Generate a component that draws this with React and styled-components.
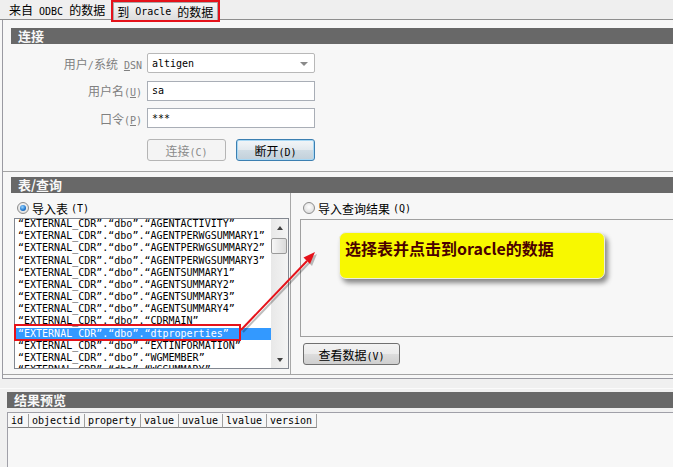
import React from "react";
import styled, { createGlobalStyle, css } from "styled-components";

const GlobalStyle = createGlobalStyle`
  html, body { margin: 0; padding: 0; background: #f7f7f7; }
  body {
    font-family: "Noto Sans CJK SC", "Liberation Sans", sans-serif;
    font-size: 12px;
    color: #000;
  }
`;

const mono = css`
  font-family: "DejaVu Sans Mono", "Noto Sans CJK SC", monospace;
  font-size: 10px;
  letter-spacing: 0;
`;

const Screen = styled.div`
  position: relative;
  width: 673px;
  height: 467px;
  overflow: hidden;
  background: #f7f7f7;
`;

const L = styled.span`
  ${mono}
  text-decoration: ${({ $u }) => ($u ? "underline" : "none")};
`;

/* ---------- tabs ---------- */
const TabBar = styled.div`
  display: flex;
  align-items: flex-start;
  height: 19px;
  padding-left: 9px;
  background: #efefef;
  border-bottom: 1px solid #8e8e8e;
`;

const TabLabel = styled.div`
  line-height: 19px;
  margin-right: 6px;
  white-space: pre;
`;

const ActiveTab = styled.div`
  position: relative;
  z-index: 2;
  display: flex;
  height: 22px;
  box-sizing: border-box;
  border: 2px solid #e5121a;
`;

const TabFace = styled.span`
  display: flex;
  align-items: center;
  padding: 0 4px 0 3px;
  background: linear-gradient(#f6f6f6, #dcdcdc);
  border: 1px solid #a8a8a8;
  border-bottom: none;
  white-space: pre;
`;

/* ---------- main frame ---------- */
const Main = styled.div`
  margin-left: 2px;
  padding: 8px 0 3px;
  border-left: 1px solid #9a9aa2;
  border-bottom: 1px solid #9a9aa2;
`;

const SectionHeader = styled.div`
  margin-left: ${({ $indent }) => $indent}px;
  margin-top: ${({ $top = 0 }) => $top}px;
  height: 16px;
  line-height: 16px;
  padding-left: 7px;
  background: #686868;
  color: #f8f8f8;
  font-size: 13px;
  font-weight: bold;
`;

const ConnectGroup = styled.div`
  padding-bottom: 10px;
  border-bottom: 1px solid #a4a4a4;
`;

const Form = styled.div`
  display: grid;
  grid-template-columns: 139px 168px;
  grid-template-rows: 20px 20px 20px auto;
  column-gap: 5px;
  row-gap: 7.5px;
  margin-top: 9px;
`;

const Label = styled.label`
  justify-self: end;
  align-self: center;
  color: #808080;
  white-space: pre;
`;

const Field = styled.div`
  position: relative;
  display: flex;
  align-items: center;
  box-sizing: border-box;
  height: 20px;
  padding-left: 4px;
  background: #fff;
  border: 1px solid ${({ $select }) => ($select ? "#b8b8b8" : "#a9aeb6")};
  border-radius: ${({ $select }) => ($select ? "2px" : "0")};
  ${mono}

  ${({ $select }) =>
    $select &&
    css`
      &::after {
        content: "";
        position: absolute;
        right: 6px;
        top: 8px;
        border-left: 4px solid transparent;
        border-right: 4px solid transparent;
        border-top: 4px solid #8a8a8a;
      }
    `}
`;

const ButtonRow = styled.div`
  grid-column: 2;
  display: flex;
  gap: 10px;
  margin-top: 3.5px;
  height: 22px;
`;

const Button = styled.button`
  box-sizing: border-box;
  width: ${({ $w }) => $w}px;
  height: 22px;
  padding: 0;
  border-radius: 3px;
  font-family: "Noto Sans CJK SC", sans-serif;
  font-size: 12px;
  white-space: pre;
  ${({ $variant }) =>
    $variant === "disabled"
      ? css`
          color: #8a8a8a;
          border: 1px solid #b5b5b5;
          background: #f4f4f4;
        `
      : $variant === "focus"
      ? css`
          color: #000;
          border: 1px solid #3c7fb1;
          box-shadow: inset 0 0 0 1px #a8d8f4;
          background: linear-gradient(#f3f6f8, #e2e9ee 50%, #d0dce4 51%, #c2d0da);
        `
      : css`
          color: #000;
          border: 1px solid #707070;
          background: linear-gradient(#f3f3f3, #ebebeb 50%, #dddddd 51%, #cfcfcf);
        `}
`;

/* ---------- table / query ---------- */
const Split = styled.div`
  display: grid;
  grid-template-columns: 288px 1fr;
  border-bottom: 1px solid #a4a4a4;
`;

const LeftPanel = styled.div`
  padding: 7px 0 5px 11px;
  border-right: 1px solid #a8a8a8;
`;

const RightPanel = styled.div`
  padding: 7px 0 0 9px;
`;

const RadioRow = styled.div`
  display: flex;
  align-items: center;
  gap: 3px;
  height: 16px;
  padding-left: 3px;
  white-space: pre;
`;

const Radio = styled.span`
  position: relative;
  width: 12px;
  height: 12px;
  box-sizing: border-box;
  border-radius: 50%;
  border: 1px solid #8c8c8c;
  background: radial-gradient(circle at 50% 40%, #ffffff, #d4d4d4);

  ${({ $checked }) =>
    $checked &&
    css`
      &::after {
        content: "";
        position: absolute;
        inset: 2px;
        border-radius: 50%;
        background: radial-gradient(circle at 40% 35%, #9ad6ff, #1d74cc 60%, #0b4a92);
      }
    `}
`;

const List = styled.div`
  position: relative;
  display: flex;
  box-sizing: border-box;
  width: 275px;
  height: 151px;
  margin-top: 2px;
  background: #fff;
  border: 1px solid #828790;
`;

const Rows = styled.div`
  flex: 1;
  margin-top: -1px;
  overflow: hidden;
`;

const Row = styled.div`
  height: 12.18px;
  line-height: 12.18px;
  padding-left: 3px;
  white-space: pre;
  ${mono}
  color: ${({ $selected }) => ($selected ? "#fff" : "#000")};
  background: ${({ $selected }) => ($selected ? "#3399ff" : "transparent")};
`;

const Scrollbar = styled.div`
  display: flex;
  flex-direction: column;
  width: 17px;
  background: linear-gradient(90deg, #e8e8e8, #f4f4f4);
`;

const ScrollArrow = styled.div`
  height: 17px;
  display: flex;
  align-items: center;
  justify-content: center;
  margin-top: ${({ $down }) => ($down ? "auto" : "0")};

  &::before {
    content: "";
    border-left: 3.5px solid transparent;
    border-right: 3.5px solid transparent;
    ${({ $down }) =>
      $down ? "border-top: 4px solid #404040;" : "border-bottom: 4px solid #404040;"}
  }
`;

const Thumb = styled.div`
  height: 16px;
  margin: 2px 1px 0 0;
  box-sizing: border-box;
  border: 1px solid #9a9a9a;
  border-radius: 2px;
  background: linear-gradient(90deg, #f6f6f6, #dadada);
`;

const Marker = styled.div`
  position: absolute;
  z-index: 2;
  left: -1px;
  top: 105px;
  width: 227px;
  height: 17px;
  box-sizing: border-box;
  border: 2px solid #e5121a;
`;

const QueryBox = styled.div`
  position: relative;
  box-sizing: border-box;
  height: 118px;
  margin-top: 3px;
  background: #f7f7f7;
  border: 1px solid #a0a0a0;
  border-right: none;
`;

const Callout = styled.div`
  position: absolute;
  left: 38px;
  top: 12px;
  width: 266px;
  height: 47px;
  box-sizing: border-box;
  padding: 5px 0 0 5px;
  line-height: 20px;
  background: #f8f800;
  border: 1px solid #ecece0;
  border-radius: 7px;
  box-shadow: 3px 4px 5px rgba(0, 0, 0, 0.45);
  color: #4a0000;
  font-size: 16px;
  font-weight: bold;
`;

const ViewButtonWrap = styled.div`
  margin: 6px 0 0 3px;
`;

/* ---------- preview ---------- */
const Preview = styled.div`
  height: 88px;
  display: flex;
  flex-direction: column;
  padding: 13px 0 0 7px;
  background: #f0f0f0;
  box-shadow: inset 0 9px 0 #f0f0f0, inset 0 10px 0 #fbfbfb;
`;

const PreviewTable = styled.div`
  flex: 1;
  display: flex;
  align-items: flex-start;
  margin-top: 4px;
  padding-top: 1px;
  background: #f7f7f7;
  border-top: 1px solid #a0a0a8;
  border-left: 1px solid #a0a0a8;
`;

const HeadCell = styled.div`
  box-sizing: border-box;
  width: ${({ $w }) => $w}px;
  height: 14px;
  line-height: 13px;
  padding-left: 3px;
  border-right: 1px solid #a0a0a0;
  border-bottom: 1px solid #808080;
  ${mono}
`;

const Overlay = styled.svg`
  position: absolute;
  left: 0;
  top: 0;
  pointer-events: none;
`;

const tables = [
  "AGENTACTIVITY",
  "AGENTPERWGSUMMARY1",
  "AGENTPERWGSUMMARY2",
  "AGENTPERWGSUMMARY3",
  "AGENTSUMMARY1",
  "AGENTSUMMARY2",
  "AGENTSUMMARY3",
  "AGENTSUMMARY4",
  "CDRMAIN",
  "dtproperties",
  "EXTINFORMATION",
  "WGMEMBER",
  "WGSUMMARY",
];

const columns = [
  ["id", 21],
  ["objectid", 56],
  ["property", 56],
  ["value", 38],
  ["uvalue", 44],
  ["lvalue", 44],
  ["version", 50],
];

export default function App() {
  return (
    <Screen>
      <GlobalStyle />
      <TabBar>
        <TabLabel>
          来自<L> ODBC </L>的数据
        </TabLabel>
        <ActiveTab>
          <TabFace>
            到<L> Oracle </L>的数据
          </TabFace>
        </ActiveTab>
      </TabBar>

      <Main>
        <ConnectGroup>
          <SectionHeader $indent={8}>连接</SectionHeader>
          <Form>
            <Label>
              用户<L>/</L>系统<L> </L>
              <L $u>D</L>
              <L>SN</L>
            </Label>
            <Field $select>altigen</Field>
            <Label>
              用户名<L>(</L>
              <L $u>U</L>
              <L>)</L>
            </Label>
            <Field>sa</Field>
            <Label>
              口令<L>(</L>
              <L $u>P</L>
              <L>)</L>
            </Label>
            <Field>***</Field>
            <ButtonRow>
              <Button $w={79} $variant="disabled">
                连接<L>(C)</L>
              </Button>
              <Button $w={79} $variant="focus">
                断开<L>(D)</L>
              </Button>
            </ButtonRow>
          </Form>
        </ConnectGroup>

        <SectionHeader $indent={8} $top={5}>
          表/查询
        </SectionHeader>
        <Split>
          <LeftPanel>
            <RadioRow>
              <Radio $checked />
              导入表<L>(T)</L>
            </RadioRow>
            <List>
              <Rows>
                {tables.map((t, i) => (
                  <Row key={t} $selected={i === 9}>
                    “EXTERNAL_CDR”.“dbo”.“{t}”
                  </Row>
                ))}
              </Rows>
              <Scrollbar>
                <ScrollArrow />
                <Thumb />
                <ScrollArrow $down />
              </Scrollbar>
              <Marker />
            </List>
          </LeftPanel>
          <RightPanel>
            <RadioRow>
              <Radio />
              导入查询结果<L>(Q)</L>
            </RadioRow>
            <QueryBox>
              <Callout>选择表并点击到oracle的数据</Callout>
            </QueryBox>
            <ViewButtonWrap>
              <Button $w={97}>
                查看数据<L>(V)</L>
              </Button>
            </ViewButtonWrap>
          </RightPanel>
        </Split>
      </Main>

      <Preview>
        <SectionHeader $indent={0}>结果预览</SectionHeader>
        <PreviewTable>
          {columns.map(([name, w]) => (
            <HeadCell key={name} $w={w}>
              {name}
            </HeadCell>
          ))}
        </PreviewTable>
      </Preview>

      <Overlay width="673" height="467">
        <g opacity="0.25" transform="translate(2 2)">
          <line x1="241" y1="330" x2="307" y2="261" stroke="#000" strokeWidth="2" />
          <polygon points="315,252 310,264 303.5,257.5" fill="#000" />
        </g>
        <line x1="241" y1="330" x2="307" y2="261" stroke="#e5121a" strokeWidth="2" />
        <polygon points="315,252 310,264 303.5,257.5" fill="#e5121a" />
      </Overlay>
    </Screen>
  );
}
